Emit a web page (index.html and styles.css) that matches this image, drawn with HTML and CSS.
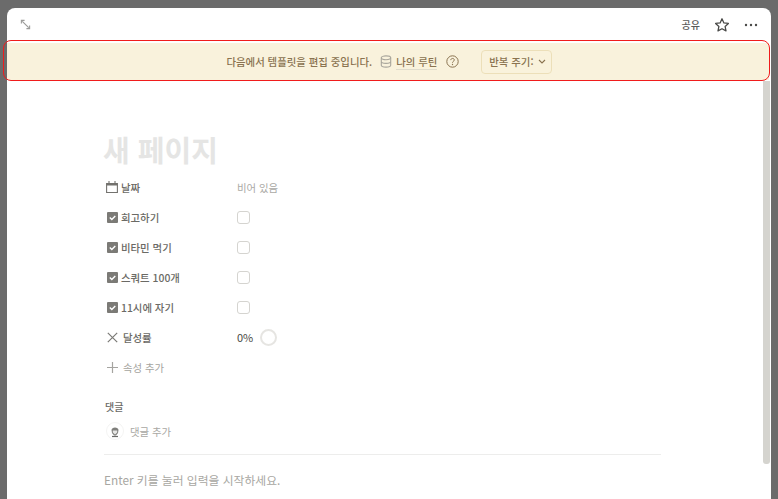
FILE: index.html
```html
<!DOCTYPE html>
<html lang="ko">
<head>
<meta charset="utf-8">
<title>새 페이지</title>
<link rel="stylesheet" href="styles.css">
</head>
<body>
<div class="window">
  <header class="topbar">
    <svg class="expand" width="11" height="11" viewBox="0 0 12 12"><path d="M2.500 2.500l7 7M1.500 5V1.500H5M10.500 7v3.500H7" fill="none" stroke="#9a9a98" stroke-width="1.200"/></svg>
    <div class="actions">
      <span class="share">공유</span>
      <svg width="16" height="16" viewBox="0 0 16 16"><path d="M8 1.800l1.900 4.100 4.500.5-3.300 3 .9 4.500L8 11.700l-4 2.200.9-4.500-3.300-3 4.500-.5z" fill="none" stroke="#4a4a48" stroke-width="1.300" stroke-linejoin="round"/></svg>
      <svg width="14" height="4" viewBox="0 0 14 4"><circle cx="2" cy="2" r="1.200" fill="#4a4a48"/><circle cx="7" cy="2" r="1.200" fill="#4a4a48"/><circle cx="12" cy="2" r="1.200" fill="#4a4a48"/></svg>
    </div>
  </header>

  <div class="banner">
    <span>다음에서 템플릿을 편집 중입니다.</span>
    <svg class="db" width="12" height="13" viewBox="0 0 12 13"><g fill="none" stroke="#a9a69c" stroke-width="1.100"><ellipse cx="6" cy="2.800" rx="4.700" ry="1.900"/><path d="M1.300 2.800v7.400c0 1 2.100 1.900 4.700 1.900s4.700-.9 4.700-1.900V2.800M1.300 6.500c0 1 2.100 1.900 4.700 1.900s4.700-.9 4.700-1.900"/></g></svg>
    <span class="link">나의 루틴</span>
    <svg class="help" width="13" height="13" viewBox="0 0 13 13"><circle cx="6.500" cy="6.500" r="5.700" fill="none" stroke="#8a7350" stroke-width="1"/><path d="M4.800 5.100c0-2.200 3.500-2.200 3.500-.1 0 1.300-1.800 1.300-1.800 2.700" fill="none" stroke="#8a7350" stroke-width="1"/><circle cx="6.500" cy="9.500" r=".7" fill="#8a7350"/></svg>
    <span class="repeat">반복 주기:
      <svg width="8" height="5" viewBox="0 0 8 5"><path d="M1 1l3 3 3-3" fill="none" stroke="#8a7350" stroke-width="1.100"/></svg>
    </span>
  </div>

  <main class="page">
    <h1 class="title">새 페이지</h1>

    <div class="row">
      <div class="key">
        <svg class="ic-date" width="12" height="12" viewBox="0 0 12 12"><path d="M.6 2.500h10.800v9H.6z" fill="none" stroke="#73726e" stroke-width="1.100"/><path d="M.6 3h10.800v1.600H.6z" fill="#73726e"/><path d="M3 0v2.500M9 0v2.500" stroke="#73726e" stroke-width="1.100"/></svg>
        <span>날짜</span>
      </div>
      <div class="empty">비어 있음</div>
    </div>

    <div class="row">
      <div class="key"><svg class="ic" width="11" height="11" viewBox="0 0 11 11"><rect width="11" height="11" rx="1" fill="#7b7a76"/><path d="M2.800 5.600l2 1.900 3.500-3.600" fill="none" stroke="#fff" stroke-width="1.400"/></svg><span>회고하기</span></div>
      <div class="box"></div>
    </div>
    <div class="row">
      <div class="key"><svg class="ic" width="11" height="11" viewBox="0 0 11 11"><rect width="11" height="11" rx="1" fill="#7b7a76"/><path d="M2.800 5.600l2 1.900 3.500-3.600" fill="none" stroke="#fff" stroke-width="1.400"/></svg><span>비타민 먹기</span></div>
      <div class="box"></div>
    </div>
    <div class="row">
      <div class="key"><svg class="ic" width="11" height="11" viewBox="0 0 11 11"><rect width="11" height="11" rx="1" fill="#7b7a76"/><path d="M2.800 5.600l2 1.900 3.500-3.600" fill="none" stroke="#fff" stroke-width="1.400"/></svg><span>스쿼트 100개</span></div>
      <div class="box"></div>
    </div>
    <div class="row">
      <div class="key"><svg class="ic" width="11" height="11" viewBox="0 0 11 11"><rect width="11" height="11" rx="1" fill="#7b7a76"/><path d="M2.800 5.600l2 1.900 3.500-3.600" fill="none" stroke="#fff" stroke-width="1.400"/></svg><span>11시에 자기</span></div>
      <div class="box"></div>
    </div>
    <div class="row">
      <div class="key"><svg class="ic-x" width="11" height="11" viewBox="0 0 11 11"><path d="M.8.800l9.400 9.400M10.200.800L.8 10.200" stroke="#7b7a76" stroke-width="1.200"/></svg><span>달성률</span></div>
      <div class="value"><span>0%</span><i class="ring"></i></div>
    </div>
    <div class="row add">
      <div class="key"><svg class="ic-x" width="11" height="11" viewBox="0 0 11 11"><path d="M5.500 0v11M0 5.500h11" stroke="#a5a4a0" stroke-width="1.200"/></svg><span>속성 추가</span></div>
    </div>

    <section class="comments">
      <div class="c-title">댓글</div>
      <div class="c-add">
        <svg class="avatar" width="18" height="18" viewBox="0 0 18 18"><circle cx="9" cy="9" r="8.500" fill="#fff" stroke="#f4f4f3"/><path d="M5.500 8c0-3.500 7-3.500 7 0l-.5 3-2 2.500H8L6 11z" fill="#7f7f7c"/><path d="M6.800 8.500h4.400v2l-2.200 2-2.200-2z" fill="#e6e6e4"/><path d="M6 14.500h6" stroke="#6a6a68" stroke-width="1.200"/></svg>
        <span>댓글 추가</span>
      </div>
    </section>

    <p class="hint">Enter 키를 눌러 입력을 시작하세요.</p>
  </main>

  <div class="scrollbar"></div>
</div>
<div class="outline"></div>
</body>
</html>
```

FILE: styles.css
```css
* { box-sizing: border-box; }
html, body { height: 100%; margin: 0; }
body {
  position: relative;
  overflow: hidden;
  padding: 8px 7px 0;
  background: #6b6b6b;
  font-family: "Noto Sans CJK KR", "Noto Sans", sans-serif;
  color: #55534e;
}
.window {
  position: relative;
  height: 100%;
  background: #fff;
  border-radius: 8px 8px 0 0;
  overflow: hidden;
}
.topbar {
  height: 33px;
  margin-bottom: 2px;
  padding: 0 13px 0 13px;
  display: flex;
  align-items: center;
  justify-content: space-between;
}
.actions { display: flex; align-items: center; gap: 14px; }
.share { font-size: 10px; font-weight: 500; color: #5a5a58; }

.banner {
  height: 37px;
  width: 762px;
  padding-left: 2px;
  display: flex;
  align-items: center;
  justify-content: center;
  background: #f9f2dc;
  color: #8a7350;
  font-size: 10.4px;
  font-weight: 500;
}
.db { margin-left: 8px; margin-right: 4px; }
.link { border-bottom: 1px solid #e0dccb; line-height: 15px; }
.help { margin-left: 9px; margin-right: 22px; }
.repeat {
  display: flex;
  align-items: center;
  gap: 4px;
  height: 24px;
  padding: 0 5px 0 7px;
  border: 1px solid #ecdfb9;
  border-radius: 4px;
}

.page { width: 557px; margin-left: 97px; }
.title {
  margin: 47px 0 0 -1px;
  height: 45px;
  line-height: 44px;
  font-size: 29px;
  font-weight: 700;
  color: #e5e5e4;
}
.row {
  display: flex;
  align-items: center;
  height: 30px;
  font-size: 10.4px;
}
.key {
  display: flex;
  align-items: center;
  width: 133px;
  color: #6b6a65;
  font-weight: 500;
  padding-left: 3px;
}
.ic { margin-right: 3px; flex: none; }
.ic-x { margin-right: 5px; flex: none; }
.ic-date { margin-left: -1px; margin-right: 3px; flex: none; }
.empty { color: #aaa9a5; }
.box {
  width: 13px;
  height: 13px;
  margin-top: 1px;
  border: 1px solid #d5d4d0;
  border-radius: 3px;
}
.value { display: flex; align-items: center; gap: 7px; color: #4a4945; font-size: 11px; }
.ring {
  width: 17px;
  height: 17px;
  border: 2px solid #e6e5e2;
  border-radius: 50%;
}
.add .key { color: #a5a4a0; font-weight: 400; }

.comments {
  margin-top: 17px;
  padding-bottom: 10px;
  border-bottom: 1px solid #ededec;
}
.c-title { font-size: 10px; font-weight: 500; color: #6a6965; line-height: 16px; padding-left: 1px; }
.c-add {
  display: flex;
  align-items: center;
  gap: 6px;
  height: 26px;
  margin-top: 3px;
  padding-left: 2px;
  font-size: 10.4px;
  color: #a9a8a4;
}
.hint {
  margin: 15px 0 0;
  font-size: 11.8px;
  line-height: 20px;
  color: #a8a7a2;
}
.scrollbar {
  position: absolute;
  top: 73px;
  right: 1px;
  width: 7px;
  height: 383px;
  background: #d5d4cf;
  border-radius: 0 0 3px 3px;
}
.outline {
  position: absolute;
  left: 3px;
  top: 40px;
  width: 767px;
  height: 41px;
  border: 1.5px solid #f01c1c;
  border-radius: 8px;
}
```
